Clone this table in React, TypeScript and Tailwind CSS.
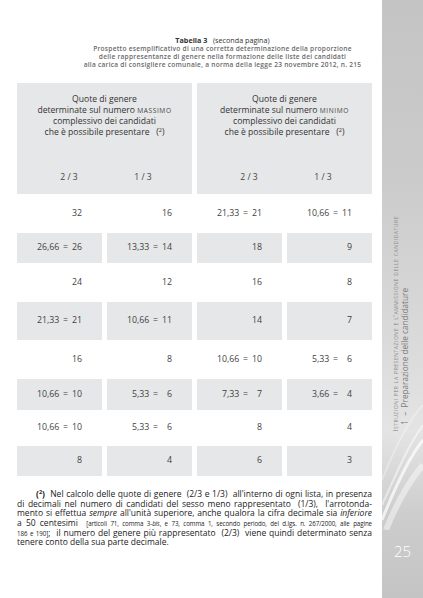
import React from "react";

const rows: { h: string; gray: boolean; v: string[] }[] = [
  { h: "h-[39px]", gray: false, v: ["32", "16", "21,33 = 21", "10,66 = 11"] },
  { h: "h-[30px]", gray: true, v: ["26,66 = 26", "13,33 = 14", "18", "9"] },
  { h: "h-[39px]", gray: false, v: ["24", "12", "16", "8"] },
  { h: "h-[38px]", gray: true, v: ["21,33 = 21", "10,66 = 11", "14", "7"] },
  { h: "h-[39px]", gray: false, v: ["16", "8", "10,66 = 10", "5,33 = \u20076"] },
  { h: "h-[31px]", gray: true, v: ["10,66 = 10", "5,33 = \u20076", "7,33 = \u20077", "3,66 = \u20074"] },
  { h: "h-[36px]", gray: false, v: ["10,66 = 10", "5,33 = \u20076", "8", "4"] },
  { h: "h-[30px]", gray: true, v: ["8", "4", "6", "3"] },
];

function Sup() {
  return <span className="relative top-[-3px] text-[5.5px] leading-[5px]">2</span>;
}

function HeaderBox({ word }: { word: string }) {
  return (
    <div className="bg-[#e6e7e8] h-[111px] flex flex-col pt-[11px] pb-[12px] text-[#333] text-[8.6px] leading-[10.7px] text-center">
      <div>Quote di genere</div>
      <div>
        determinate sul numero{" "}
        <span className="tracking-[0.6px] text-[6.6px] text-[#444]">{word}</span>
      </div>
      <div>complessivo dei candidati</div>
      <div className="whitespace-pre">
        che è possibile presentare   (<Sup />)
      </div>
      <div className="mt-auto flex ml-[17px] gap-[4px] text-[8.6px] leading-[10px] text-[#444] whitespace-pre">
        <div className="w-[70px] text-center">2 / 3</div>
        <div className="w-[70px] text-center">1 / 3</div>
      </div>
    </div>
  );
}

function JLine({ children, indent }: { children: React.ReactNode; indent?: boolean }) {
  return (
    <div
      className={
        "h-[9.7px] text-justify [text-align-last:justify] whitespace-nowrap " + (indent ? "pl-[19px]" : "")
      }
    >
      {children}
    </div>
  );
}

export default function App() {
  return (
    <div
      className="w-[423px] h-[598px] flex bg-white overflow-hidden"
      style={{ fontFamily: "'Open Sans', 'Noto Sans', sans-serif" }}
    >
      <div className="w-[382px] pl-[17px] pr-[10px] pt-[35px]">
        <div className="pl-[56px] text-center">
          <div className="text-[7.2px] leading-[10px] text-[#333] whitespace-pre">
            <span className="font-bold">Tabella 3</span>   (seconda pagina)
          </div>
          <div className="text-[6.6px] leading-[8px] font-semibold text-[#6a6a6a] tracking-[0.25px]">
            <div>Prospetto esemplificativo di una corretta determinazione della proporzione</div>
            <div>delle rappresentanze di genere nella formazione delle liste dei candidati</div>
            <div>alla carica di consigliere comunale, a norma della legge 23 novembre 2012, n. 215</div>
          </div>
        </div>

        <div className="mt-[14px] grid grid-cols-2 gap-x-[5px]">
          <HeaderBox word="MASSIMO" />
          <HeaderBox word="MINIMO" />
        </div>

        <div className="flex flex-col">
          {rows.map((r, i) => (
            <div key={i} className={"grid grid-cols-4 gap-x-[5px] " + r.h}>
              {r.v.map((val, j) => (
                <div
                  key={j}
                  className={
                    "flex items-center justify-end pr-[20px] text-[8.8px] text-[#3f3f3f] whitespace-pre [word-spacing:1.5px] " +
                    (r.gray ? "bg-[#e6e7e8]" : "")
                  }
                >
                  {val}
                </div>
              ))}
            </div>
          ))}
        </div>

        <div className="mt-[13px] text-[8.5px] leading-[9.7px] text-[#222]">
          <JLine indent>
            <span className="font-bold">
              (<Sup />)
            </span>
            {"\u00a0 "}Nel calcolo delle quote di genere{"\u00a0 "}(2/3 e 1/3){"\u00a0 "}all'interno di ogni lista, in presenza
          </JLine>
          <JLine>
            di decimali nel numero di candidati del sesso meno rappresentato{"\u00a0 "}(1/3),{"\u00a0 "}l'arrotonda-
          </JLine>
          <JLine>
            mento si effettua <i>sempre</i> all'unità superiore, anche qualora la cifra decimale sia{" "}
            <i>inferiore</i>
          </JLine>
          <JLine>
            a 50 centesimi{"\u00a0 "}
            <span className="text-[6.2px] tracking-[-0.1px]">
              [articoli 71, comma 3-<i>bis</i>, e 73, comma 1, secondo periodo, del d.lgs. n. 267/2000, alle pagine
            </span>
          </JLine>
          <JLine>
            <span className="text-[6.2px]">186 e 190]</span>;{"\u00a0 "}il numero del genere più rappresentato{"\u00a0 "}(2/3){"\u00a0 "}viene
            quindi determinato senza
          </JLine>
          <div className="h-[9.7px]">tenere conto della sua parte decimale.</div>
        </div>
      </div>

      <div className="relative w-[41px] h-full bg-[linear-gradient(to_bottom,#c4c4c4_0%,#cbcbcb_30%,#dcdcdc_60%,#e4e4e4_72%,#cdcdcd_86%,#c4c4c4_100%)]">
        <svg className="absolute left-0 top-[380px]" width="41" height="150" viewBox="0 0 41 150">
          <path d="M0 140 C 12 110, 25 80, 41 60" stroke="#ffffff" strokeOpacity="0.7" strokeWidth="3" fill="none" />
          <path d="M0 125 C 14 95, 26 65, 41 45" stroke="#ffffff" strokeOpacity="0.5" strokeWidth="2" fill="none" />
          <path d="M4 150 C 16 120, 28 100, 41 85" stroke="#ffffff" strokeOpacity="0.45" strokeWidth="6" fill="none" />
          <path d="M0 100 C 12 70, 26 40, 41 25" stroke="#ffffff" strokeOpacity="0.3" strokeWidth="2" fill="none" />
        </svg>
        <div className="absolute left-[10px] bottom-[166px] [writing-mode:vertical-rl] rotate-180 text-[7.2px] leading-[7px] tracking-[0.55px] text-[#8a8a8a] [font-variant:small-caps] whitespace-nowrap">
          Istruzioni per la presentazione e l'ammissione delle candidature
        </div>
        <div className="absolute left-[18px] bottom-[173px] [writing-mode:vertical-rl] rotate-180 text-[8.2px] leading-[10px] text-[#7a7a7a] whitespace-pre">
          1  –  Preparazione delle candidature
        </div>
        <div className="absolute left-0 right-0 top-[541px] text-center text-white text-[15px] leading-[20px] font-light">
          25
        </div>
      </div>
    </div>
  );
}
